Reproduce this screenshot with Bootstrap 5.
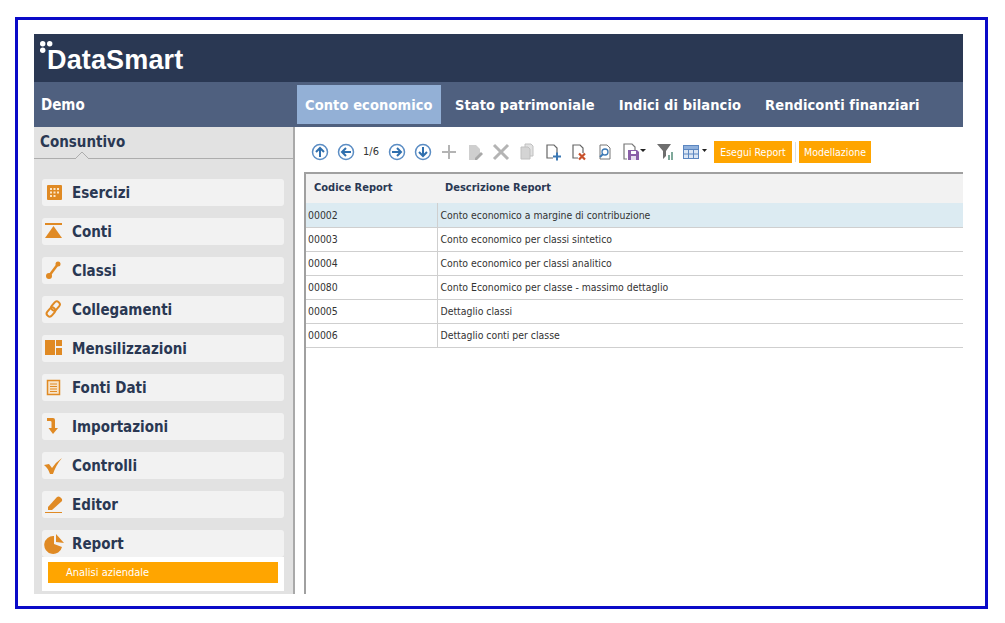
<!DOCTYPE html>
<html lang="en">
<head>
    <meta charset="UTF-8">
    <title>DataSmart</title>
    <link href="https://cdn.jsdelivr.net/npm/bootstrap@5.3.0/dist/css/bootstrap.min.css" rel="stylesheet">
    <style>
        body { background: #fff; font-family: "DejaVu Sans Condensed", "DejaVu Sans", sans-serif; }
        .frame-box { width: 973px; height: 592px; margin: 17px 0 0 15px; border: 3px solid #0a0ac8; padding: 14px 22px 12px 16px; }
        .app-box { height: 560px; overflow: hidden; }
        .top-logo { height: 48px; background: #2a3853; color: #fff; font: bold 27px "Liberation Sans", sans-serif; padding: 9px 0 0 13px; position: relative; letter-spacing: .15px; line-height: 34px; }
        .logo-dots { position: absolute; left: 6px; top: 7px; }
        .sub-bar { height: 45px; background: #4f607f; color: #fff; font-weight: bold; font-size: 15px; white-space: nowrap; }
        .demo-cell { width: 263px; flex: none; padding: 0 0 0 7px; line-height: 46px; }
        .tab-item { flex: none; font-size: 14.5px; letter-spacing: .1px; padding: 0 10px 0 8px; height: 39px; line-height: 41px; margin: 3px 6px 0 0; color: #fff; text-decoration: none; }
        .tab-item.on { background: #93b0d6; width: 144px; margin-right: 6px; }
        .side-col { width: 261px; flex: none; background: #e2e2e2; border-right: 2px solid #a9a9a9; }
        .side-head { height: 32px; border-bottom: 1px solid #adadad; color: #2a3853; font-weight: bold; font-size: 15px; padding: 4px 6px; position: relative; }
        .side-head svg { position: absolute; left: 41px; bottom: -1px; }
        .side-menu { padding: 20px 9px 0 8px; }
        .side-item { height: 27px; background: #f2f2f2; border-radius: 3px; margin-bottom: 12px; color: #2a3853; font-weight: bold; font-size: 15px; line-height: 29px; position: relative; padding-left: 30px; }
        .side-item svg { position: absolute; left: 2px; top: 3px; }
        .side-sub { background: #fff; height: 34px; margin-top: -12px; padding: 5px 6px; }
        .side-sub div { background: #ffa500; color: #fff; height: 21px; line-height: 22px; font-size: 11px; padding-left: 18px; font-weight: normal; }
        .main-col { background: #fff; min-width: 0; }
        .tool-row { height: 45px; padding: 4px 0 0 16px; font-size: 11px; color: #333; }
        .tool-ico { width: 26px; display: flex; justify-content: flex-start; align-items: center; flex: none; }
        .pager-txt { width: 25px; flex: none; padding-top: 2px; }
        .tool-gap { margin-left: 9px; }
        .tool-end { margin-right: 5px; }
        .tool-btn { background: #ffa500; color: #fff; height: 22px; line-height: 22px; font-size: 10.5px; text-align: center; border: 0; padding: 0; flex: none; }
        .tool-sep { width: 1px; height: 20px; background: #ddd; margin: 0 3px; }
        .grid-wrap { margin-left: 9px; border-left: 2px solid #a0a0a0; border-top: 2px solid #a0a0a0; height: 422px; }
        .report-tab { width: 100%; font-size: 10.4px; margin: 0; color: #333; }
        .report-tab th { background: #f2f2f2; height: 29px; color: #2a3853; font-size: 11px; padding: 0 0 0 8px; border: 0; vertical-align: middle; }
        .report-tab td { height: 24px; padding: 2px 0 0 3px; border-bottom: 1px solid #cfcfcf; vertical-align: middle; background: transparent; color: #333; }
        .report-tab td:first-child { width: 131px; padding-left: 2px; border-right: 1px solid #cfcfcf; }
        .report-tab tr.sel td { background: #dcebf2; }
    </style>
</head>
<body>
    <div class="frame-box">
        <div class="app-box d-flex flex-column">
            <div class="top-logo">
                <svg class="logo-dots" width="14" height="14" viewBox="0 0 14 14" fill="#fff"><circle cx="2.700" cy="2.700" r="2.700"/><circle cx="9.700" cy="2.700" r="2.700"/><circle cx="2.700" cy="9.200" r="2.700"/></svg>
                DataSmart
            </div>
            <div class="sub-bar d-flex">
                <div class="demo-cell">Demo</div>
                <a class="tab-item on" href="#">Conto economico</a>
                <a class="tab-item" href="#">Stato patrimoniale</a>
                <a class="tab-item" href="#">Indici di bilancio</a>
                <a class="tab-item" href="#">Rendiconti finanziari</a>
            </div>
            <div class="d-flex flex-grow-1">
                <div class="side-col">
                    <div class="side-head">Consuntivo
                        <svg width="14" height="8" viewBox="0 0 14 8"><path d="M0 8 L7 1 L14 8" fill="#e2e2e2" stroke="#adadad"/></svg>
                    </div>
                    <div class="side-menu">
                        <div class="side-item">
                            <svg width="20" height="20" viewBox="0 0 20 20"><rect x="3" y="3" width="15" height="15" rx="1" fill="#e08a24"/><path d="M6 6h2v2H6zM9.500 6h2v2h-2zM13 6h2v2h-2zM6 9.500h2v2H6zM9.500 9.500h2v2h-2zM13 9.500h2v2h-2zM6 13h2v2H6zM9.500 13h2v2h-2z" fill="#fbe6c8"/></svg>
                            Esercizi
                        </div>
                        <div class="side-item">
                            <svg width="20" height="20" viewBox="0 0 20 20" fill="#e08a24"><rect x="1" y="2" width="17" height="2"/><path d="M9.500 5 L18 17 H1 Z"/></svg>
                            Conti
                        </div>
                        <div class="side-item">
                            <svg width="20" height="20" viewBox="0 0 20 20"><path d="M5 16 L14 4" stroke="#e08a24" stroke-width="2.500"/><circle cx="5" cy="16" r="3" fill="#e08a24"/><circle cx="14" cy="4" r="2.500" fill="#e08a24"/></svg>
                            Classi
                        </div>
                        <div class="side-item">
                            <svg width="20" height="20" viewBox="0 0 20 20" fill="none" stroke="#e08a24" stroke-width="2"><rect x="8.500" y="2" width="6" height="10" rx="3" transform="rotate(40 11.500 7)"/><rect x="4" y="8" width="6" height="10" rx="3" transform="rotate(40 7 13)"/></svg>
                            Collegamenti
                        </div>
                        <div class="side-item">
                            <svg width="20" height="20" viewBox="0 0 20 20" fill="#e08a24"><rect x="1" y="2" width="10" height="15"/><rect x="12" y="2" width="6" height="6"/><rect x="12" y="10" width="6" height="7"/></svg>
                            Mensilizzazioni
                        </div>
                        <div class="side-item">
                            <svg width="20" height="20" viewBox="0 0 20 20"><rect x="3.500" y="3.500" width="12" height="14" fill="#f7e3c8" stroke="#e08a24" stroke-width="1.500"/><path d="M6 7h7M6 9.500h7M6 12h7M6 14.500h7" stroke="#e08a24"/></svg>
                            Fonti Dati
                        </div>
                        <div class="side-item">
                            <svg width="20" height="20" viewBox="0 0 20 20" fill="#e08a24"><path d="M3 2 H9 Q11 2 11 4 V12 H14 L9 18 L4.500 12 H7.500 V6 Q7.500 5 6 5 H3 Z"/></svg>
                            Importazioni
                        </div>
                        <div class="side-item">
                            <svg width="20" height="20" viewBox="0 0 20 20" fill="#e08a24"><path d="M0 10 L5 9 L8 13 Q12 7 18 3 Q12 10 9 19 H6 Q4 13 0 10 Z"/></svg>
                            Controlli
                        </div>
                        <div class="side-item">
                            <svg width="20" height="20" viewBox="0 0 20 20"><path d="M4 13 L13 3 Q14.500 2 16 3 L18 5 Q18.500 6.500 17.500 7.500 L8 16 H4 Z" fill="#e08a24"/><rect x="1" y="18" width="17" height="1" fill="#e08a24"/></svg>
                            Editor
                        </div>
                        <div class="side-item">
                            <svg width="22" height="22" viewBox="0 0 22 22" fill="#e08a24"><path d="M10 3 V11 L18 14 A9 9 0 1 1 10 3 Z"/><path d="M12 1 L20 10 L12 9 Z"/></svg>
                            Report
                        </div>
                        <div class="side-sub"><div>Analisi aziendale</div></div>
                    </div>
                </div>
                <div class="main-col flex-grow-1">
                    <div class="tool-row d-flex align-items-center">
                        <span class="tool-ico"><svg width="18" height="18" viewBox="0 0 18 18"><circle cx="9" cy="9" r="7.500" fill="#fff" stroke="#5b8dc4" stroke-width="1.500"/><path d="M9 14V5M5 9l4-4 4 4" fill="none" stroke="#2f6fae" stroke-width="2"/></svg></span>
                        <span class="tool-ico"><svg width="18" height="18" viewBox="0 0 18 18"><circle cx="9" cy="9" r="7.500" fill="#fff" stroke="#5b8dc4" stroke-width="1.500"/><path d="M14 9H5M9 5L5 9l4 4" fill="none" stroke="#2f6fae" stroke-width="2"/></svg></span>
                        <span class="pager-txt">1/6</span>
                        <span class="tool-ico"><svg width="18" height="18" viewBox="0 0 18 18"><circle cx="9" cy="9" r="7.500" fill="#fff" stroke="#5b8dc4" stroke-width="1.500"/><path d="M4 9h9M9 5l4 4-4 4" fill="none" stroke="#2f6fae" stroke-width="2"/></svg></span>
                        <span class="tool-ico"><svg width="18" height="18" viewBox="0 0 18 18"><circle cx="9" cy="9" r="7.500" fill="#fff" stroke="#5b8dc4" stroke-width="1.500"/><path d="M9 4v9M5 9l4 4 4-4" fill="none" stroke="#2f6fae" stroke-width="2"/></svg></span>
                        <span class="tool-ico"><svg width="18" height="18" viewBox="0 0 18 18"><path d="M9 2v14M2 9h14" stroke="#b4b4b4" stroke-width="2"/></svg></span>
                        <span class="tool-ico"><svg width="18" height="18" viewBox="0 0 18 18"><path d="M3 2h7l4 4v5l-5 6H3z" fill="#cfcfcf"/><path d="M9 15l6-6 2 2-6 6H9z" fill="#a8a8a8"/></svg></span>
                        <span class="tool-ico"><svg width="18" height="18" viewBox="0 0 18 18"><path d="M2 2l14 14M16 2L2 16" stroke="#b4b4b4" stroke-width="3"/></svg></span>
                        <span class="tool-ico"><svg width="18" height="18" viewBox="0 0 18 18"><path d="M7 1h6l2 2v10H7z" fill="#e2e2e2" stroke="#c0c0c0"/><path d="M3 4h7l2 2v10H3z" fill="#d4d4d4" stroke="#c0c0c0"/></svg></span>
                        <span class="tool-ico"><svg width="18" height="18" viewBox="0 0 18 18"><path d="M9 15H3V2h7l3 3v5" fill="none" stroke="#666" stroke-width="1.200"/><path d="M13 9.500v8M9 13.500h8" stroke="#3b78b4" stroke-width="2"/></svg></span>
                        <span class="tool-ico"><svg width="18" height="18" viewBox="0 0 18 18"><path d="M8 15H3V2h7l3 3v5" fill="none" stroke="#666" stroke-width="1.200"/><path d="M9 10.500l6 6M15 10.500l-6 6" stroke="#c8512c" stroke-width="2.200"/></svg></span>
                        <span class="tool-ico"><svg width="18" height="18" viewBox="0 0 18 18"><path d="M4 2h7l3 3v11H4z" fill="#fff" stroke="#777"/><circle cx="9" cy="9" r="3" fill="#fff" stroke="#3b78b4" stroke-width="1.300"/><path d="M7 11l-3 3" stroke="#3b78b4" stroke-width="1.800"/></svg></span>
                        <span class="tool-ico"><svg width="24" height="18" viewBox="0 0 24 18"><path d="M5 16H2V1h8l3 3v3" fill="none" stroke="#777" stroke-width="1.200"/><path d="M6 7h9l2 2v8H6z" fill="#8a5fa8"/><rect x="9" y="8" width="5" height="3" fill="#fff"/><rect x="9" y="13" width="5" height="4" fill="#e8dff0"/><path d="M18 6h6l-3 3z" fill="#222"/></svg></span>
                        <span class="tool-ico tool-gap"><svg width="18" height="18" viewBox="0 0 18 18"><path d="M0 1h14L9 8v5l-3 3V8z" fill="#6e6e6e"/><rect x="11" y="12" width="2" height="5" fill="#7fa89a"/><rect x="14" y="9" width="2" height="8" fill="#7fa89a"/></svg></span>
                        <span class="tool-ico tool-end"><svg width="24" height="14" viewBox="0 0 24 14"><rect x=".5" y=".5" width="15" height="13" fill="#dbe6f4" stroke="#5b86c0"/><path d="M.5 4.500h15M.5 9h15M5.500 .5v13M10.500 .5v13" stroke="#5b86c0"/><rect x=".5" y=".5" width="15" height="4" fill="#8fb0dc" stroke="#5b86c0"/><path d="M19 4h5l-2.500 3z" fill="#222"/></svg></span>
                        <button class="tool-btn" style="width:78px" type="button">Esegui Report</button>
                        <span class="tool-sep"></span>
                        <button class="tool-btn" style="width:72px" type="button">Modellazione</button>
                    </div>
                    <div class="grid-wrap">
                        <table class="report-tab table">
                            <thead><tr><th>Codice Report</th><th>Descrizione Report</th></tr></thead>
                            <tbody>
                                <tr class="sel"><td>00002</td><td>Conto economico a margine di contribuzione</td></tr>
                                <tr><td>00003</td><td>Conto economico per classi sintetico</td></tr>
                                <tr><td>00004</td><td>Conto economico per classi analitico</td></tr>
                                <tr><td>00080</td><td>Conto Economico per classe - massimo dettaglio</td></tr>
                                <tr><td>00005</td><td>Dettaglio classi</td></tr>
                                <tr><td>00006</td><td>Dettaglio conti per classe</td></tr>
                            </tbody>
                        </table>
                    </div>
                </div>
            </div>
        </div>
    </div>
    <script src="https://cdn.jsdelivr.net/npm/bootstrap@5.3.0/dist/js/bootstrap.bundle.min.js"></script>
</body>
</html>
